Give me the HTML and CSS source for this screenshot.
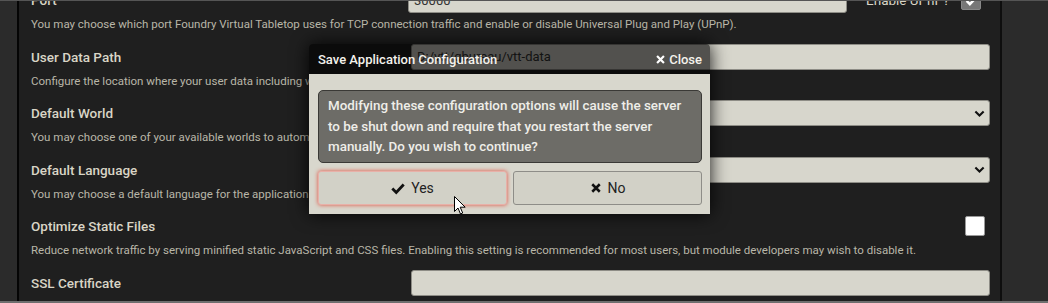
FILE: index.html
```html
<!DOCTYPE html>
<html lang="en">
<head>
    <meta charset="UTF-8">
    <meta name="viewport" content="width=device-width, initial-scale=1.0">
    <title>Application Configuration</title>
    <link rel="stylesheet" href="styles.css">
</head>
<body>
    <div class="app">
        <div class="side"></div>
        <div class="panel">
            <form id="setupForm">
                <div class="form-group port-row">
                    <div class="line">
                        <label for="port">Port</label>
                        <input type="text" id="port" class="port-input" value="30000">
                        <span class="upnp-label">Enable UPnP?</span>
                        <span class="check checked">
                            <svg viewBox="0 0 16 16" width="13" height="13"><path d="M2 8.5l4 4 8-8.5" fill="none" stroke="#fff" stroke-width="3"/></svg>
                        </span>
                    </div>
                    <p class="hint">You may choose which port Foundry Virtual Tabletop uses for TCP connection traffic and enable or disable Universal Plug and Play (UPnP).</p>
                </div>

                <div class="form-group">
                    <div class="line">
                        <label for="dataPath">User Data Path</label>
                        <input type="text" id="dataPath" class="field" value="D:/vtt/gbureau/vtt-data">
                    </div>
                    <p class="hint">Configure the location where your user data including worlds, systems, and modules is stored.</p>
                </div>

                <div class="form-group">
                    <div class="line">
                        <label>Default World</label>
                        <div class="field select">
                            <svg viewBox="0 0 16 16" width="11" height="11"><path d="M2 5l6 6 6-6" fill="none" stroke="#111" stroke-width="3"/></svg>
                        </div>
                    </div>
                    <p class="hint">You may choose one of your available worlds to automatically launch when the server starts.</p>
                </div>

                <div class="form-group">
                    <div class="line">
                        <label>Default Language</label>
                        <div class="field select">
                            <svg viewBox="0 0 16 16" width="11" height="11"><path d="M2 5l6 6 6-6" fill="none" stroke="#111" stroke-width="3"/></svg>
                        </div>
                    </div>
                    <p class="hint">You may choose a default language for the application which is used unless a user chooses their own language.</p>
                </div>

                <div class="form-group">
                    <div class="line">
                        <label>Optimize Static Files</label>
                        <span class="check"></span>
                    </div>
                    <p class="hint">Reduce network traffic by serving minified static JavaScript and CSS files. Enabling this setting is recommended for most users, but module developers may wish to disable it.</p>
                </div>

                <div class="form-group">
                    <div class="line">
                        <label for="sslCert">SSL Certificate</label>
                        <input type="text" id="sslCert" class="field" value="">
                    </div>
                </div>
            </form>
        </div>
        <div class="side-right"></div>
    </div>

    <div class="dialog">
        <header class="dialog-header">
            <h4>Save Application Configuration</h4>
            <a class="close">
                <svg viewBox="0 0 16 16" width="11" height="11"><path d="M3 3l10 10M13 3L3 13" stroke="#fff" stroke-width="3.2"/></svg>
                Close
            </a>
        </header>
        <div class="dialog-body">
            <p class="notice">Modifying these configuration options will cause the server to be shut down and require that you restart the server manually. Do you wish to continue?</p>
            <div class="buttons">
                <button class="yes">
                    <svg viewBox="0 0 16 16" width="14" height="14"><path d="M1.5 8.5l4.5 4.5 8.5-9" fill="none" stroke="#111" stroke-width="3.2"/></svg>
                    Yes
                </button>
                <button>
                    <svg viewBox="0 0 16 16" width="12" height="12"><path d="M3 3l10 10M13 3L3 13" stroke="#111" stroke-width="3.4"/></svg>
                    No
                </button>
            </div>
        </div>
    </div>

    <svg class="cursor" viewBox="0 0 12 19" width="12" height="19"><path d="M0.5 0.5v15l3.5-3.5 2.5 6 2.2-1-2.5-5.8h5z" fill="#fff" stroke="#000" stroke-width="1"/></svg>
</body>
</html>
```

FILE: styles.css
```css
body {
    margin: 0;
    background-color: #2b2b2b;
    font-family: Roboto, "Noto Sans", sans-serif;
    overflow: hidden;
    height: 303px;
}
.app {
    display: flex;
    border-top: 1px solid #555;
    border-bottom: 2px solid #6e6e6e;
    box-sizing: border-box;
    height: 303px;
}
.side {
    width: 17px;
    border-right: 2px solid #050505;
}
.side-right {
    flex: 1;
    border-left: 2px solid #0e0e0e;
}
.panel {
    width: 959px;
    background-color: #1f1f1f;
    padding: 0 10px 0 12px;
    overflow: hidden;
}
form {
    margin-top: -14px;
}
.form-group {
    height: 56.5px;
}
.line {
    display: flex;
    align-items: center;
    height: 26px;
}
label {
    flex: 1;
    font-size: 13.5px;
    font-weight: 500;
    color: #d9d5c6;
}
.hint {
    margin: 3px 0 0;
    font-size: 11.5px;
    line-height: 16px;
    color: #b9b6a8;
    white-space: nowrap;
}
input, .field {
    box-sizing: border-box;
    height: 26px;
    border: 1px solid #8e8d86;
    border-radius: 3px;
    background-color: #d7d6cc;
    font-family: inherit;
    font-size: 13px;
    color: #333;
    padding: 0 5px;
}
.field {
    width: 579px;
}
.port-input {
    width: 439px;
}
.upnp-label {
    margin-left: 19px;
    font-size: 13.5px;
    color: #d9d5c6;
    width: 95px;
}
.check {
    box-sizing: border-box;
    width: 20px;
    height: 20px;
    border: 1px solid #999;
    border-radius: 2px;
    background-color: #fff;
    margin-right: 5px;
    display: flex;
    align-items: center;
    justify-content: center;
}
.check.checked {
    background-color: #777;
    border-color: #888;
    margin-right: 9px;
}
.select {
    display: flex;
    align-items: center;
    justify-content: flex-end;
    padding-right: 4px;
}

.dialog {
    position: absolute;
    left: 309px;
    top: 44px;
    width: 401px;
    height: 170px;
    box-shadow: 0 0 18px rgba(0, 0, 0, 0.9);
    border-radius: 4px 4px 0 0;
}
.dialog-header {
    display: flex;
    align-items: center;
    justify-content: space-between;
    height: 30px;
    padding: 0 8px 0 9px;
    background-color: rgba(0, 0, 0, 0.62);
    border-radius: 4px 4px 0 0;
}
.dialog-header h4 {
    margin: 0;
    font-size: 13px;
    font-weight: 500;
    color: #f4f2ec;
}
.close {
    display: flex;
    align-items: center;
    gap: 3px;
    font-size: 13px;
    font-weight: 500;
    color: #f4f2ec;
}
.dialog-body {
    background-color: #d8d7cd;
    height: 140px;
    box-sizing: border-box;
    padding: 16px 8px 0 9px;
}
.notice {
    margin: 0;
    box-sizing: border-box;
    height: 73px;
    padding: 5px 9px;
    background-color: #6d6c67;
    border: 1px solid #3a3936;
    border-radius: 5px;
    font-size: 13.4px;
    font-weight: 500;
    line-height: 20.5px;
    color: #efeee9;
}
.buttons {
    display: flex;
    gap: 6px;
    margin-top: 8px;
}
button {
    flex: 1;
    height: 34px;
    display: flex;
    align-items: center;
    justify-content: center;
    gap: 6px;
    background-color: #d2d1c7;
    border: 1px solid #8e8d88;
    border-radius: 3px;
    font-family: inherit;
    font-size: 14px;
    color: #222;
}
button.yes {
    border-color: #e8b0a8;
    box-shadow: 0 0 4px #e05040;
}
.cursor {
    position: absolute;
    left: 454px;
    top: 196px;
}
```
